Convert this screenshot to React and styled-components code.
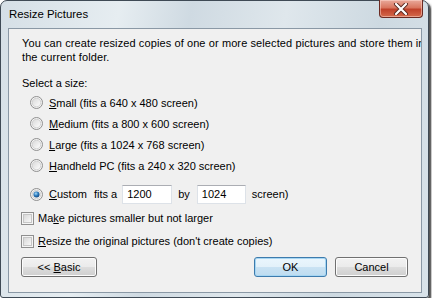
import React from "react";
import styled, { createGlobalStyle } from "styled-components";

const Global = createGlobalStyle`
  html, body { margin: 0; padding: 0; background: #ffffff; }
  body { font-family: "Liberation Sans", Arial, sans-serif; }
`;

const Window = styled.div`
  box-sizing: border-box;
  width: 429px;
  height: 298px;
  border: 1px solid #3f4a55;
  border-radius: 7px 7px 3px 3px;
  background: linear-gradient(100deg, #d5dfe6 0%, #e6edf1 25%, #cfdae2 40%, #dfe7ec 60%, #cdd9e1 80%, #d9e3ea 100%);
  box-shadow: 2px 2px 1px rgba(0, 0, 0, 0.55), 3px 3px 3px rgba(0, 0, 0, 0.25);
  display: flex;
  flex-direction: column;
`;

const TitleBar = styled.div`
  height: 27px;
  display: flex;
  justify-content: space-between;
  align-items: flex-start;
  padding-left: 7px;
  padding-right: 5px;
`;

const Title = styled.div`
  font-size: 11.4px;
  line-height: 27px;
  color: #000;
  padding-left: 1px;
`;

const CloseButton = styled.div`
  width: 42px;
  height: 17px;
  margin-top: -1px;
  border: 1px solid #6b2a22;
  border-top: none;
  border-radius: 0 0 4px 4px;
  background: linear-gradient(180deg, #e9a99b 0%, #d9765f 45%, #c0412a 55%, #d46a4c 100%);
  display: flex;
  align-items: center;
  justify-content: center;
  box-shadow: inset 0 0 0 1px rgba(255, 220, 210, 0.5);
`;

const Panel = styled.div`
  box-sizing: border-box;
  margin: 0 6px 0 7px;
  height: 265px;
  border: 1px solid #8a98a5;
  background: #f0f0f0;
  padding: 7px 13px 0 12px;
  display: flex;
  flex-direction: column;
  overflow: hidden;
  font-size: 11px;
  color: #000;
`;

const Intro = styled.div`
  line-height: 14px;
  white-space: nowrap;
  margin-left: 1px;
  letter-spacing: 0.1px;
`;

const SectionLabel = styled.div`
  margin-top: 12px;
  line-height: 14px;
  margin-left: 1px;
`;

const OptionList = styled.div`
  display: flex;
  flex-direction: column;
  margin-top: 2px;
  padding-left: 9px;
`;

const OptionRow = styled.div`
  height: ${(p) => p.$h || 21}px;
  margin-top: ${(p) => p.$mt || 0}px;
  display: flex;
  align-items: center;
  white-space: nowrap;
`;

const Label = styled.span`
  margin-left: ${(p) => p.$ml ?? 6}px;
`;

const Key = styled.span`
  text-decoration: underline;
  text-underline-offset: 1px;
`;

const Field = styled.div`
  box-sizing: border-box;
  width: ${(p) => p.$w}px;
  height: 19px;
  margin-left: ${(p) => p.$ml}px;
  border: 1px solid #dde2e8;
  border-top-color: #abadb3;
  background: #fff;
  padding-left: 4px;
  line-height: 17px;
`;

const CheckRow = styled.div`
  height: 20px;
  margin-top: 3px;
  display: flex;
  align-items: center;
  white-space: nowrap;
`;

const ButtonRow = styled.div`
  display: flex;
  margin-top: 6px;
  gap: 8px;
`;

const Spacer = styled.div`
  flex: 1;
`;

const Button = styled.div`
  box-sizing: border-box;
  width: ${(p) => p.$w}px;
  height: 20px;
  border: 1px solid ${(p) => (p.$default ? "#3d7bad" : "#707070")};
  border-radius: 3px;
  background: ${(p) =>
    p.$default
      ? "linear-gradient(180deg, #eaf6fd 0%, #e3f1fa 48%, #c9e2f3 52%, #bedcf0 100%)"
      : "linear-gradient(180deg, #f2f2f2 0%, #ebebeb 48%, #dddddd 52%, #cfcfcf 100%)"};
  box-shadow: inset 0 0 0 1px ${(p) => (p.$default ? "#a6d6f3" : "#fcfcfc")};
  display: flex;
  align-items: center;
  justify-content: center;
  line-height: 18px;
  color: #000;
`;

function Radio({ checked }) {
  return (
    <svg width="13" height="13" viewBox="0 0 13 13">
      <defs>
        <linearGradient id="rb" x1="0" y1="0" x2="1" y2="1">
          <stop offset="0" stopColor="#d8d8d8" />
          <stop offset="1" stopColor="#ffffff" />
        </linearGradient>
        <radialGradient id="rd" cx="0.4" cy="0.35" r="0.7">
          <stop offset="0" stopColor="#a9dbf6" />
          <stop offset="0.5" stopColor="#2d7cbf" />
          <stop offset="1" stopColor="#11437a" />
        </radialGradient>
      </defs>
      <circle cx="6.5" cy="6.5" r="6" fill="#f4f4f4" stroke="#8f8f8f" strokeWidth="1" />
      <circle cx="6.5" cy="6.5" r="4.3" fill="url(#rb)" stroke="#c9c9c9" strokeWidth="0.8" />
      {checked && <circle cx="6.5" cy="6.5" r="3" fill="url(#rd)" />}
    </svg>
  );
}

function Check() {
  return (
    <svg width="13" height="13" viewBox="0 0 13 13">
      <defs>
        <linearGradient id="cb" x1="0" y1="0" x2="1" y2="1">
          <stop offset="0" stopColor="#d6d6d6" />
          <stop offset="1" stopColor="#fafafa" />
        </linearGradient>
      </defs>
      <rect x="0.5" y="0.5" width="12" height="12" fill="#f5f5f5" stroke="#8f8f8f" />
      <rect x="2.5" y="2.5" width="8" height="8" fill="url(#cb)" stroke="#c6c6c6" strokeWidth="1" />
    </svg>
  );
}

function CloseGlyph() {
  return (
    <svg width="16" height="12" viewBox="0 0 16 12">
      <path d="M3 1 L13 11 M13 1 L3 11" stroke="#5a2a22" strokeWidth="4" strokeLinecap="round" />
      <path d="M3 1 L13 11 M13 1 L3 11" stroke="#ffffff" strokeWidth="2.2" strokeLinecap="round" />
    </svg>
  );
}

const sizes = [
  { key: "S", rest: "mall (fits a 640 x 480 screen)" },
  { key: "M", rest: "edium (fits a 800 x 600 screen)" },
  { key: "L", rest: "arge (fits a 1024 x 768 screen)" },
  { key: "H", rest: "andheld PC (fits a 240 x 320 screen)" },
];

export default function App() {
  return (
    <>
      <Global />
      <Window>
        <TitleBar>
          <Title>Resize Pictures</Title>
          <CloseButton>
            <CloseGlyph />
          </CloseButton>
        </TitleBar>
        <Panel>
          <Intro>
            You can create resized copies of one or more selected pictures and store them in
            <br />
            the current folder.
          </Intro>
          <SectionLabel>Select a size:</SectionLabel>
          <OptionList>
            {sizes.map((s) => (
              <OptionRow key={s.key}>
                <Radio />
                <Label>
                  <Key>{s.key}</Key>
                  {s.rest}
                </Label>
              </OptionRow>
            ))}
            <OptionRow $h={22} $mt={7}>
              <Radio checked />
              <Label>
                <Key>C</Key>ustom
              </Label>
              <Label $ml={7}>fits a</Label>
              <Field $w={50} $ml={5}>1200</Field>
              <Label $ml={6}>by</Label>
              <Field $w={49} $ml={7}>1024</Field>
              <Label $ml={6}>screen)</Label>
            </OptionRow>
          </OptionList>
          <CheckRow>
            <Check />
            <Label $ml={4}>
              Ma<Key>k</Key>e pictures smaller but not larger
            </Label>
          </CheckRow>
          <CheckRow>
            <Check />
            <Label $ml={4}>
              <Key>R</Key>esize the original pictures (don't create copies)
            </Label>
          </CheckRow>
          <ButtonRow>
            <Button $w={76}>
              &lt;&lt;&nbsp;<Key>B</Key>asic
            </Button>
            <Spacer />
            <Button $w={73} $default>
              OK
            </Button>
            <Button $w={73}>Cancel</Button>
          </ButtonRow>
        </Panel>
      </Window>
    </>
  );
}
